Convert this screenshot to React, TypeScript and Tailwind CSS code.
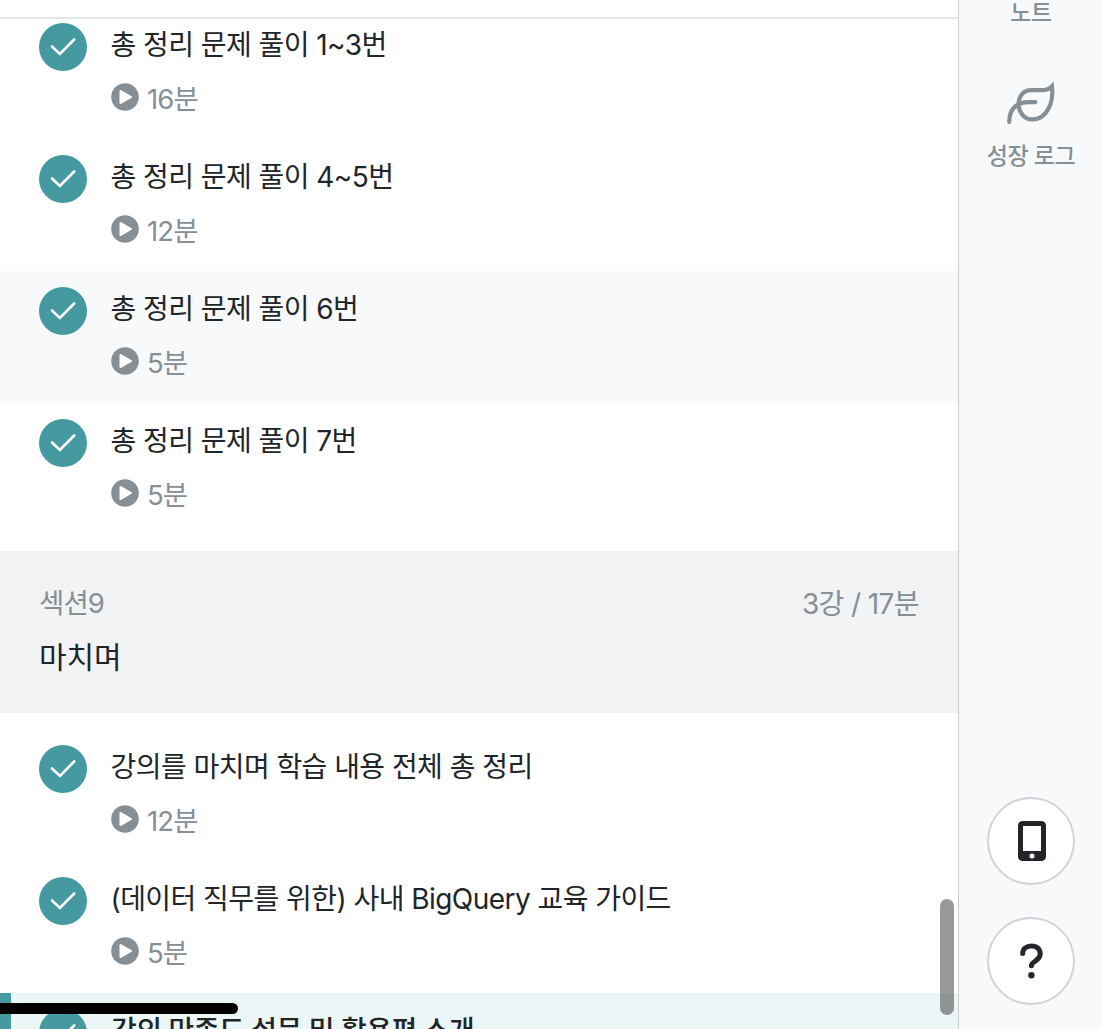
type Lesson = { title: string; time: string; tone?: string };

const practice: Lesson[] = [
  { title: '총 정리 문제 풀이 1~3번', time: '16분' },
  { title: '총 정리 문제 풀이 4~5번', time: '12분' },
  { title: '총 정리 문제 풀이 6번', time: '5분', tone: 'bg-[#f8f9fb]' },
  { title: '총 정리 문제 풀이 7번', time: '5분' },
];

const closing: Lesson[] = [
  { title: '강의를 마치며 학습 내용 전체 총 정리', time: '12분' },
  { title: '(데이터 직무를 위한) 사내 BigQuery 교육 가이드', time: '5분' },
];

function CheckBadge() {
  return (
    <svg className="mt-4 size-12 shrink-0" viewBox="0 0 48 48" fill="none">
      <circle cx="24" cy="24" r="24" fill="#459aa1" />
      <path d="M13 23.500 20.900 31 35.200 16.500" stroke="#fff" strokeWidth="2.600" strokeLinecap="round" strokeLinejoin="miter" />
    </svg>
  );
}

function PlayIcon() {
  return (
    <svg className="size-7 shrink-0" viewBox="0 0 28 28">
      <circle cx="14" cy="14" r="13.800" fill="#868e96" />
      <path d="M9.400 7.900v12.200L20.200 14Z" fill="#fff" stroke="#fff" strokeWidth="1.800" strokeLinejoin="round" />
    </svg>
  );
}

function LessonRow({ title, time, tone = '' }: Lesson) {
  return (
    <li className={`flex h-[132px] gap-6 pl-[39px] ${tone}`}>
      <CheckBadge />
      <div className="flex flex-col whitespace-nowrap">
        <p className="mt-[17px] -ml-[0.5px] h-[42px] text-[28px] leading-[42px] tracking-[-0.55px] text-[#212529]">{title}</p>
        <div className="mt-[17px] flex gap-2">
          <PlayIcon />
          <span className="mt-[1px] text-[27.5px] leading-[30px] tracking-[-0.9px] text-[#868e96]">{time}</span>
        </div>
      </div>
    </li>
  );
}

export default function App() {
  return (
    <div
      className="relative flex h-[1029px] w-[1103px] overflow-hidden bg-white font-['Inter','Noto_Sans_CJK_KR',sans-serif]"
      lang="ko"
    >
      <main className="flex h-full w-[958px] flex-col overflow-hidden">
        <header className="relative z-10 h-[19px] shrink-0 border-b-2 border-[#e5e9ed] bg-white" />
        <ul className="-mt-3 shrink-0 pb-4">
          {practice.map((l) => (
            <LessonRow key={l.title} {...l} />
          ))}
        </ul>
        <section className="h-[162px] shrink-0 bg-[#f1f3f5] px-[39px] pt-8">
          <div className="flex justify-between text-[28px] leading-[42px] tracking-[-0.6px] text-[#868e96]">
            <span className="-mt-px text-[27.5px] tracking-[-0.9px]">섹션9</span>
            <span>3강 / 17분</span>
          </div>
          <h2 className="mt-[11px] text-[30px] leading-[42px] tracking-[-0.1px] text-[#212529]">마치며</h2>
        </section>
        <ul className="shrink-0 pt-4">
          {closing.map((l) => (
            <LessonRow key={l.title} {...l} />
          ))}
          <li className="flex h-[132px] gap-6 border-l-[11px] border-[#459aa1] bg-[#edf6f7] pl-7">
            <CheckBadge />
            <p className="mt-[17px] whitespace-nowrap text-[28px] leading-[42px] font-medium tracking-[-0.5px] text-[#212529]">
              강의 만족도 설문 및 활용편 소개
            </p>
          </li>
        </ul>
      </main>

      <aside className="flex h-full w-[145px] flex-col items-center rounded-br-lg border-l border-[#c8cbce] bg-[#f8f9fb] pb-6 text-[23px] leading-[32px] tracking-[-0.5px] text-[#868e96]">
        <span className="-mt-[3px] h-8 shrink-0 font-medium whitespace-nowrap">노트</span>
        <svg className="mt-[51px] h-12 w-[52px] shrink-0" viewBox="0 0 52 48" fill="none" stroke="#868e96" strokeWidth="4.200" strokeLinecap="round">
          <path d="M4.200 42C4.200 34 6.800 27.500 13.800 24c3-1.500 5.500-1.800 9-1.800h7.500" />
          <path d="M13.600 24C13.600 16 18.700 10.200 26.200 10.200h10c5 0 8.200-.8 10.800-3.800 2 15-4.500 33-19.800 33-7.700 0-13.600-7.200-13.600-15.400Z" strokeLinejoin="miter" />
        </svg>
        <span className="mt-3 font-medium whitespace-nowrap">성장 로그</span>
        <div className="mt-auto flex flex-col gap-8">
          <button className="flex size-[88px] items-center justify-center rounded-full border-2 border-[#ced4da] bg-white">
            <svg className="ml-[2px] h-10 w-7" viewBox="0 0 28 40">
              <path fillRule="evenodd" fill="#212529" d="M4.500 0h19A4.500 4.500 0 0 1 28 4.500v31a4.500 4.500 0 0 1-4.500 4.500h-19A4.500 4.500 0 0 1 0 35.500v-31A4.500 4.500 0 0 1 4.500 0ZM5 5v25h18V5ZM14 32.500a2.500 2.500 0 1 0 0 5 2.500 2.500 0 0 0 0-5Z" />
            </svg>
          </button>
          <button className="flex size-[88px] items-center justify-center rounded-full border-2 border-[#ced4da] bg-white">
            <svg className="h-9 w-6" viewBox="0 0 24 36" fill="none">
              <path d="M3.700 10.600C3.700 5.700 7.300 2.900 12.500 2.900s8.700 3.200 8.700 8.100c0 3.900-2.500 5.500-5 7.200-2.400 1.600-3.800 2.400-3.800 4.600" stroke="#25262b" strokeWidth="5" strokeLinecap="round" />
              <circle cx="12.400" cy="32.300" r="3.200" fill="#25262b" />
            </svg>
          </button>
        </div>
      </aside>

      <div className="absolute top-[899px] left-[940px] h-[116px] w-[14px] rounded-full bg-black/40" />
      <div className="absolute top-[1003px] left-0 h-[11px] w-[238px] rounded-r-full bg-black" />
    </div>
  );
}
